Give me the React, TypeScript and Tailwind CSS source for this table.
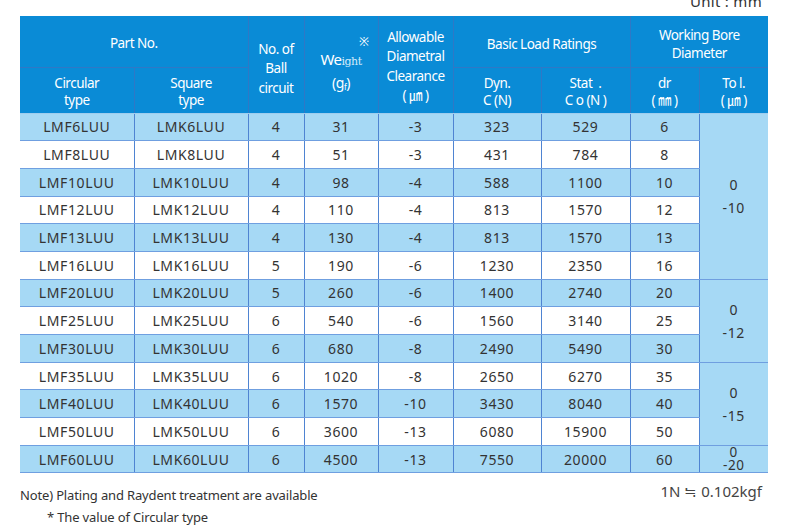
import React from 'react';

type Row = [string, string, string, string, string, string, string, string];

const rows: Row[] = [
  ['LMF6LUU', 'LMK6LUU', '4', '31', '-3', '323', '529', '6'],
  ['LMF8LUU', 'LMK8LUU', '4', '51', '-3', '431', '784', '8'],
  ['LMF10LUU', 'LMK10LUU', '4', '98', '-4', '588', '1100', '10'],
  ['LMF12LUU', 'LMK12LUU', '4', '110', '-4', '813', '1570', '12'],
  ['LMF13LUU', 'LMK13LUU', '4', '130', '-4', '813', '1570', '13'],
  ['LMF16LUU', 'LMK16LUU', '5', '190', '-6', '1230', '2350', '16'],
  ['LMF20LUU', 'LMK20LUU', '5', '260', '-6', '1400', '2740', '20'],
  ['LMF25LUU', 'LMK25LUU', '6', '540', '-6', '1560', '3140', '25'],
  ['LMF30LUU', 'LMK30LUU', '6', '680', '-8', '2490', '5490', '30'],
  ['LMF35LUU', 'LMK35LUU', '6', '1020', '-8', '2650', '6270', '35'],
  ['LMF40LUU', 'LMK40LUU', '6', '1570', '-10', '3430', '8040', '40'],
  ['LMF50LUU', 'LMK50LUU', '6', '3600', '-13', '6080', '15900', '50'],
  ['LMF60LUU', 'LMK60LUU', '6', '4500', '-13', '7550', '20000', '60'],
];

// tolerance cells merged over several rows: start row -> [span, lower value]
const tolGroups: Record<number, [number, string]> = {
  0: [6, '-10'],
  6: [3, '-12'],
  9: [3, '-15'],
  12: [1, '-20'],
};

const widths = [114, 114, 56, 74, 75, 88, 89, 69, 69];

const th = 'bg-[#0a8bd6] text-white font-normal text-center align-middle border-[#2f78c6] p-0';
const td = 'text-center align-middle p-0 border-b border-b-[#6f9fe0] border-r border-r-[#4f84d2]';

export default function App() {
  return (
    <div
      className="w-[800px] h-[531px] overflow-hidden bg-white text-[#333]"
      style={{ fontFamily: '"Noto Sans", "Noto Sans CJK KR", sans-serif' }}
    >
      <div className="flex justify-end pr-[38px] h-[16px]">
        <span className="-mt-[6px] text-[15px] leading-[15px] tracking-[0.3px] text-[#333]">Unit : mm</span>
      </div>

      <div className="pl-[20px]">
        <table className="table-fixed border-collapse w-[748px]">
          <colgroup>
            {widths.map((w, i) => (
              <col key={i} style={{ width: w }} />
            ))}
          </colgroup>
          <thead className="text-[13.5px] tracking-[-0.5px]">
            <tr className="h-[51px]">
              <th colSpan={2} className={`${th} border-r border-b pt-[4px]`}>Part No.</th>
              <th rowSpan={2} className={`${th} border-r leading-[19.5px] border-b border-b-[#9fcdee] pt-[9px]`}>
                No. of<br />Ball<br />circuit
              </th>
              <th rowSpan={2} className={`${th} border-r border-b border-b-[#9fcdee]`}>
                <div className="flex flex-col">
                  <span className="text-right pr-[9px] text-[12px] leading-[14px]">※</span>
                  <span className="leading-[20px] text-[15px]">
                    We
                    <span className="text-[11px] text-[#d5ecfa]" style={{ fontFamily: '"DejaVu Serif", serif' }}>ight</span>
                  </span>
                  <span className="leading-[22px] text-[14px]">
                    (g<sub className="text-[8px]">f</sub>)
                  </span>
                </div>
              </th>
              <th rowSpan={2} className={`${th} border-r leading-[19.5px] border-b border-b-[#9fcdee] pt-[5px]`}>
                Allowable<br />Diametral<br />Clearance<br />( ㎛ )
              </th>
              <th colSpan={2} className={`${th} border-r border-b pt-[5px]`}>Basic Load Ratings</th>
              <th colSpan={2} className={`${th} border-b leading-[18px] pt-[6px]`}>
                Working Bore<br />Diameter
              </th>
            </tr>
            <tr className="h-[46px] leading-[17px]">
              <th className={`${th} border-r border-b border-b-[#9fcdee] pt-[3px]`}>Circular<br />type</th>
              <th className={`${th} border-r border-b border-b-[#9fcdee] pt-[3px]`}>Square<br />type</th>
              <th className={`${th} border-r border-b border-b-[#9fcdee] pt-[3px]`}>Dyn.<br />C (N)</th>
              <th className={`${th} border-r border-b border-b-[#9fcdee] pt-[3px]`}>Stat&nbsp;&nbsp;.<br />C o (N )</th>
              <th className={`${th} border-r border-b border-b-[#9fcdee] pt-[3px]`}>dr<br />( ㎜ )</th>
              <th className={`${th} border-b border-b-[#9fcdee] pt-[3px]`}>To l.<br />( ㎛ )</th>
            </tr>
          </thead>
          <tbody className="text-[14px] tracking-[0.6px]">
            {rows.map((row, i) => {
              const bg = i % 2 === 0 ? 'bg-[#a6d9f5]' : 'bg-white';
              const group = tolGroups[i];
              return (
                <tr key={row[0]} className="h-[27.7px]">
                  {row.map((cell, j) => (
                    <td key={j} className={`${td} ${bg}`}>
                      {cell}
                    </td>
                  ))}
                  {group && (
                    <td
                      rowSpan={group[0]}
                      className="text-center align-middle p-0 bg-[#a6d9f5] border-b border-b-[#6f9fe0]"
                    >
                      {group[0] > 1 ? (
                        <div className="flex flex-col leading-[23px]">
                          <span>0</span>
                          <span>{group[1]}</span>
                        </div>
                      ) : (
                        <div className="leading-[13px] text-[13.5px]">
                          0<br />{group[1]}
                        </div>
                      )}
                    </td>
                  )}
                </tr>
              );
            })}
          </tbody>
        </table>
      </div>

      <div className="flex justify-between items-start pl-[20px] pr-[38px] pt-[8px]">
        <div className="text-[13px] leading-[22px] mt-[3px] tracking-[-0.15px]">
          <div>Note) Plating and Raydent treatment are available</div>
          <div className="pl-[27px]">* The value of Circular type</div>
        </div>
        <div className="text-[15px] leading-[20px] text-[#444]">1N ≒ 0.102kgf</div>
      </div>
    </div>
  );
}
